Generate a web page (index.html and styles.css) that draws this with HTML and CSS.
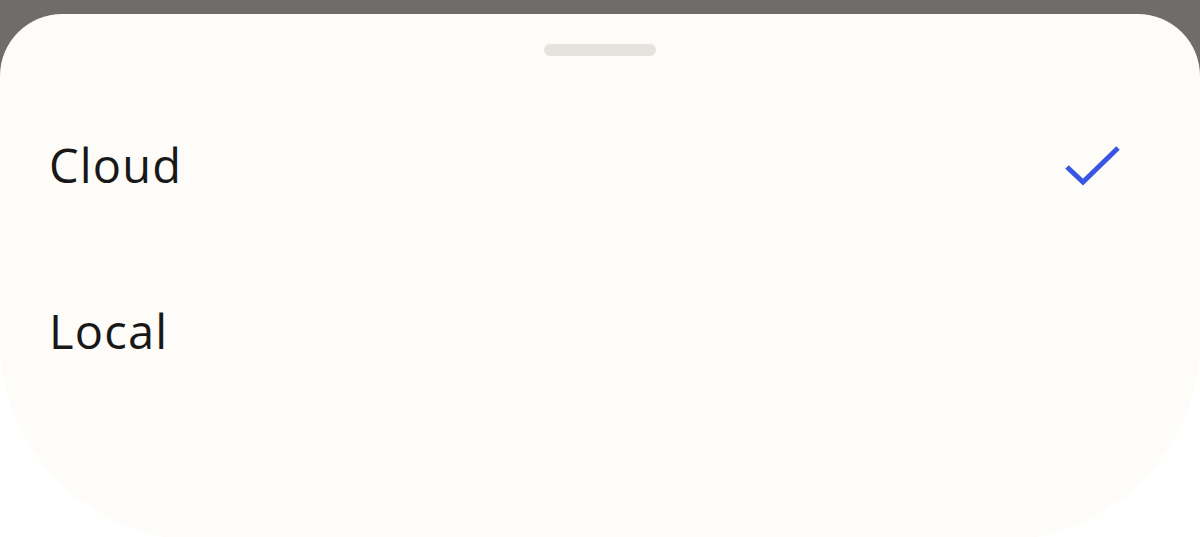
FILE: index.html
```html
<!DOCTYPE html>
<html lang="en">
<head>
<meta charset="utf-8">
<title>Storage location</title>
<link rel="stylesheet" href="styles.css">
</head>
<body>
<div class="sheet">
  <div class="handle"></div>
  <ul class="options">
    <li class="option">
      <span class="label">Cloud</span>
      <svg class="check" width="60" height="44" viewBox="0 0 60 44" aria-hidden="true">
        <polyline points="4,24 20,39 55,5" fill="none" stroke="#3a55e4" stroke-width="5" stroke-linejoin="miter"/>
      </svg>
    </li>
    <li class="option">
      <span class="label">Local</span>
    </li>
  </ul>
</div>
</body>
</html>
```

FILE: styles.css
```css
html, body {
  margin: 0;
  padding: 0;
}
body {
  width: 1200px;
  height: 537px;
  overflow: hidden;
  background: linear-gradient(#6e6d6b 0, #6e6d6b 120px, #ffffff 120px);
  font-family: "Open Sans", "Liberation Sans", sans-serif;
}
.sheet {
  margin-top: 14px;
  height: 526px;
  background: #fdfcf8;
  border-radius: 62px 62px 200px 200px;
  padding-top: 30px;
  box-sizing: border-box;
}
.handle {
  width: 112px;
  height: 12px;
  margin: 0 auto;
  border-radius: 6px;
  background: #e5e3de;
}
.options {
  list-style: none;
  margin: 26px 0 0;
  padding: 0;
}
.option {
  height: 166px;
  display: flex;
  align-items: center;
  justify-content: space-between;
  padding: 0 77px 0 49px;
}
.label {
  font-size: 47px;
  line-height: 1;
  color: #181818;
  letter-spacing: 1.2px;
}
.check {
  display: block;
}
```
